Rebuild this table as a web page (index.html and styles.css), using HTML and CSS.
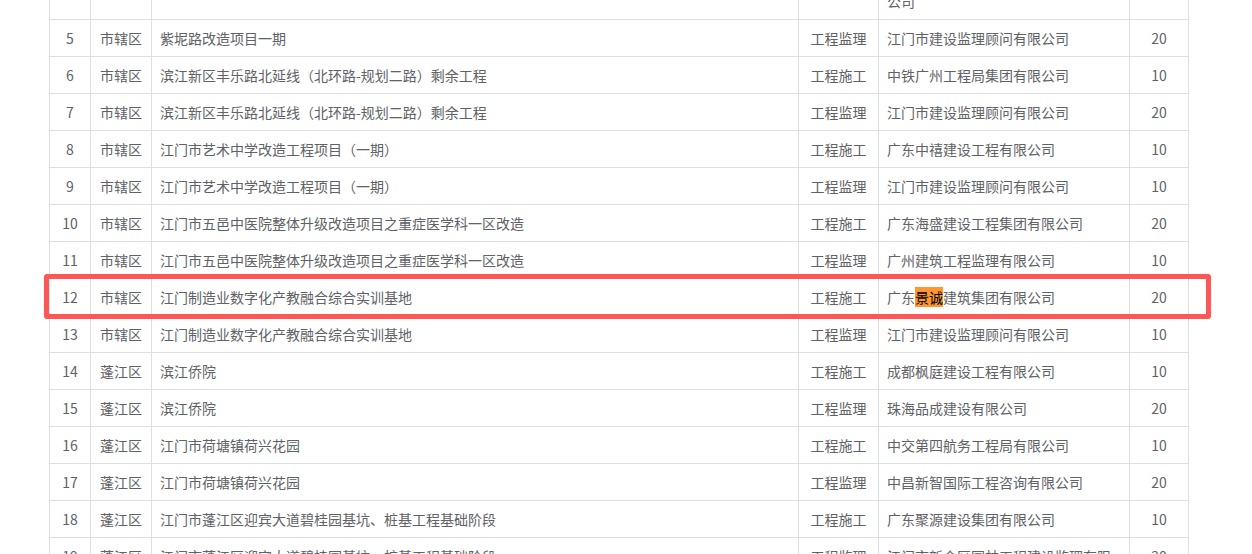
FILE: index.html
```html
<!DOCTYPE html>
<html lang="zh-CN">
<head>
<meta charset="utf-8">
<title>项目表</title>
<link rel="stylesheet" href="styles.css">
</head>
<body>
<div class="viewport">
  <table class="grid">
    <colgroup>
      <col class="c-no"><col class="c-area"><col class="c-name"><col class="c-type"><col class="c-co"><col class="c-score">
    </colgroup>
    <tbody>
      <tr><td class="num">4</td><td>市辖区</td><td>江门市某某道路改造工程</td><td class="mid">工程监理</td><td class="co">广东城乡建设工程监理咨询顾问有限公司</td><td class="num">20</td></tr>
      <tr><td class="num">5</td><td>市辖区</td><td>紫坭路改造项目一期</td><td class="mid">工程监理</td><td class="co">江门市建设监理顾问有限公司</td><td class="num">20</td></tr>
      <tr><td class="num">6</td><td>市辖区</td><td>滨江新区丰乐路北延线（北环路-规划二路）剩余工程</td><td class="mid">工程施工</td><td class="co">中铁广州工程局集团有限公司</td><td class="num">10</td></tr>
      <tr><td class="num">7</td><td>市辖区</td><td>滨江新区丰乐路北延线（北环路-规划二路）剩余工程</td><td class="mid">工程监理</td><td class="co">江门市建设监理顾问有限公司</td><td class="num">20</td></tr>
      <tr><td class="num">8</td><td>市辖区</td><td>江门市艺术中学改造工程项目（一期）</td><td class="mid">工程施工</td><td class="co">广东中禧建设工程有限公司</td><td class="num">10</td></tr>
      <tr><td class="num">9</td><td>市辖区</td><td>江门市艺术中学改造工程项目（一期）</td><td class="mid">工程监理</td><td class="co">江门市建设监理顾问有限公司</td><td class="num">10</td></tr>
      <tr><td class="num">10</td><td>市辖区</td><td>江门市五邑中医院整体升级改造项目之重症医学科一区改造</td><td class="mid">工程施工</td><td class="co">广东海盛建设工程集团有限公司</td><td class="num">20</td></tr>
      <tr><td class="num">11</td><td>市辖区</td><td>江门市五邑中医院整体升级改造项目之重症医学科一区改造</td><td class="mid">工程监理</td><td class="co">广州建筑工程监理有限公司</td><td class="num">10</td></tr>
      <tr><td class="num">12</td><td>市辖区</td><td>江门制造业数字化产教融合综合实训基地</td><td class="mid">工程施工</td><td class="co">广东<mark class="hit">景诚</mark>建筑集团有限公司</td><td class="num">20</td></tr>
      <tr><td class="num">13</td><td>市辖区</td><td>江门制造业数字化产教融合综合实训基地</td><td class="mid">工程监理</td><td class="co">江门市建设监理顾问有限公司</td><td class="num">10</td></tr>
      <tr><td class="num">14</td><td>蓬江区</td><td>滨江侨院</td><td class="mid">工程施工</td><td class="co">成都枫庭建设工程有限公司</td><td class="num">10</td></tr>
      <tr><td class="num">15</td><td>蓬江区</td><td>滨江侨院</td><td class="mid">工程监理</td><td class="co">珠海品成建设有限公司</td><td class="num">20</td></tr>
      <tr><td class="num">16</td><td>蓬江区</td><td>江门市荷塘镇荷兴花园</td><td class="mid">工程施工</td><td class="co">中交第四航务工程局有限公司</td><td class="num">10</td></tr>
      <tr><td class="num">17</td><td>蓬江区</td><td>江门市荷塘镇荷兴花园</td><td class="mid">工程监理</td><td class="co">中昌新智国际工程咨询有限公司</td><td class="num">20</td></tr>
      <tr><td class="num">18</td><td>蓬江区</td><td>江门市蓬江区迎宾大道碧桂园基坑、桩基工程基础阶段</td><td class="mid">工程施工</td><td class="co">广东聚源建设集团有限公司</td><td class="num">10</td></tr>
      <tr><td class="num">19</td><td>蓬江区</td><td>江门市蓬江区迎宾大道碧桂园基坑、桩基工程基础阶段</td><td class="mid">工程监理</td><td class="co">江门市新会区园林工程建设监理有限公司</td><td class="num">20</td></tr>
    </tbody>
  </table>
  <div class="callout"></div>
</div>
</body>
</html>
```
FILE: styles.css
```css
html, body {
  margin: 0;
  padding: 0;
  background: #ffffff;
  overflow: hidden;
}

.viewport {
  position: relative;
  width: 1252px;
  height: 554px;
  overflow: hidden;
  font-family: "Noto Sans CJK SC", "Liberation Sans", sans-serif;
  font-size: 14px;
  color: #606266;
}

.grid {
  margin: -39px 0 0 49px;
  table-layout: fixed;
  width: 1140px;
  border-collapse: separate;
  border-spacing: 0;
  border-left: 1px solid #dcdfe6;
}

.c-no { width: 41px; }
.c-area { width: 61px; }
.c-name { width: 647px; }
.c-type { width: 80px; }
.c-co { width: 251px; }
.c-score { width: 59px; }

.grid td {
  box-sizing: border-box;
  padding: 7px 4px 7px 9px;
  height: 37px;
  line-height: 22px;
  vertical-align: top;
  white-space: nowrap;
  overflow: hidden;
  border-right: 1px solid #dcdfe6;
  border-bottom: 1px solid #dcdfe6;
}

.grid td:nth-child(3) {
  padding-left: 8px;
}

.grid td.co {
  padding: 7px 10px 7px 8px;
  white-space: normal;
  word-break: break-all;
}

.grid td.num,
.grid td.mid {
  text-align: center;
  padding-left: 0;
  padding-right: 0;
}

.hit {
  background: #ff9632;
  color: #000000;
}

.callout {
  position: absolute;
  left: 44px;
  top: 274px;
  width: 1167px;
  height: 45px;
  box-sizing: border-box;
  border: 5px solid #ff5656;
  border-radius: 3px;
}
```
